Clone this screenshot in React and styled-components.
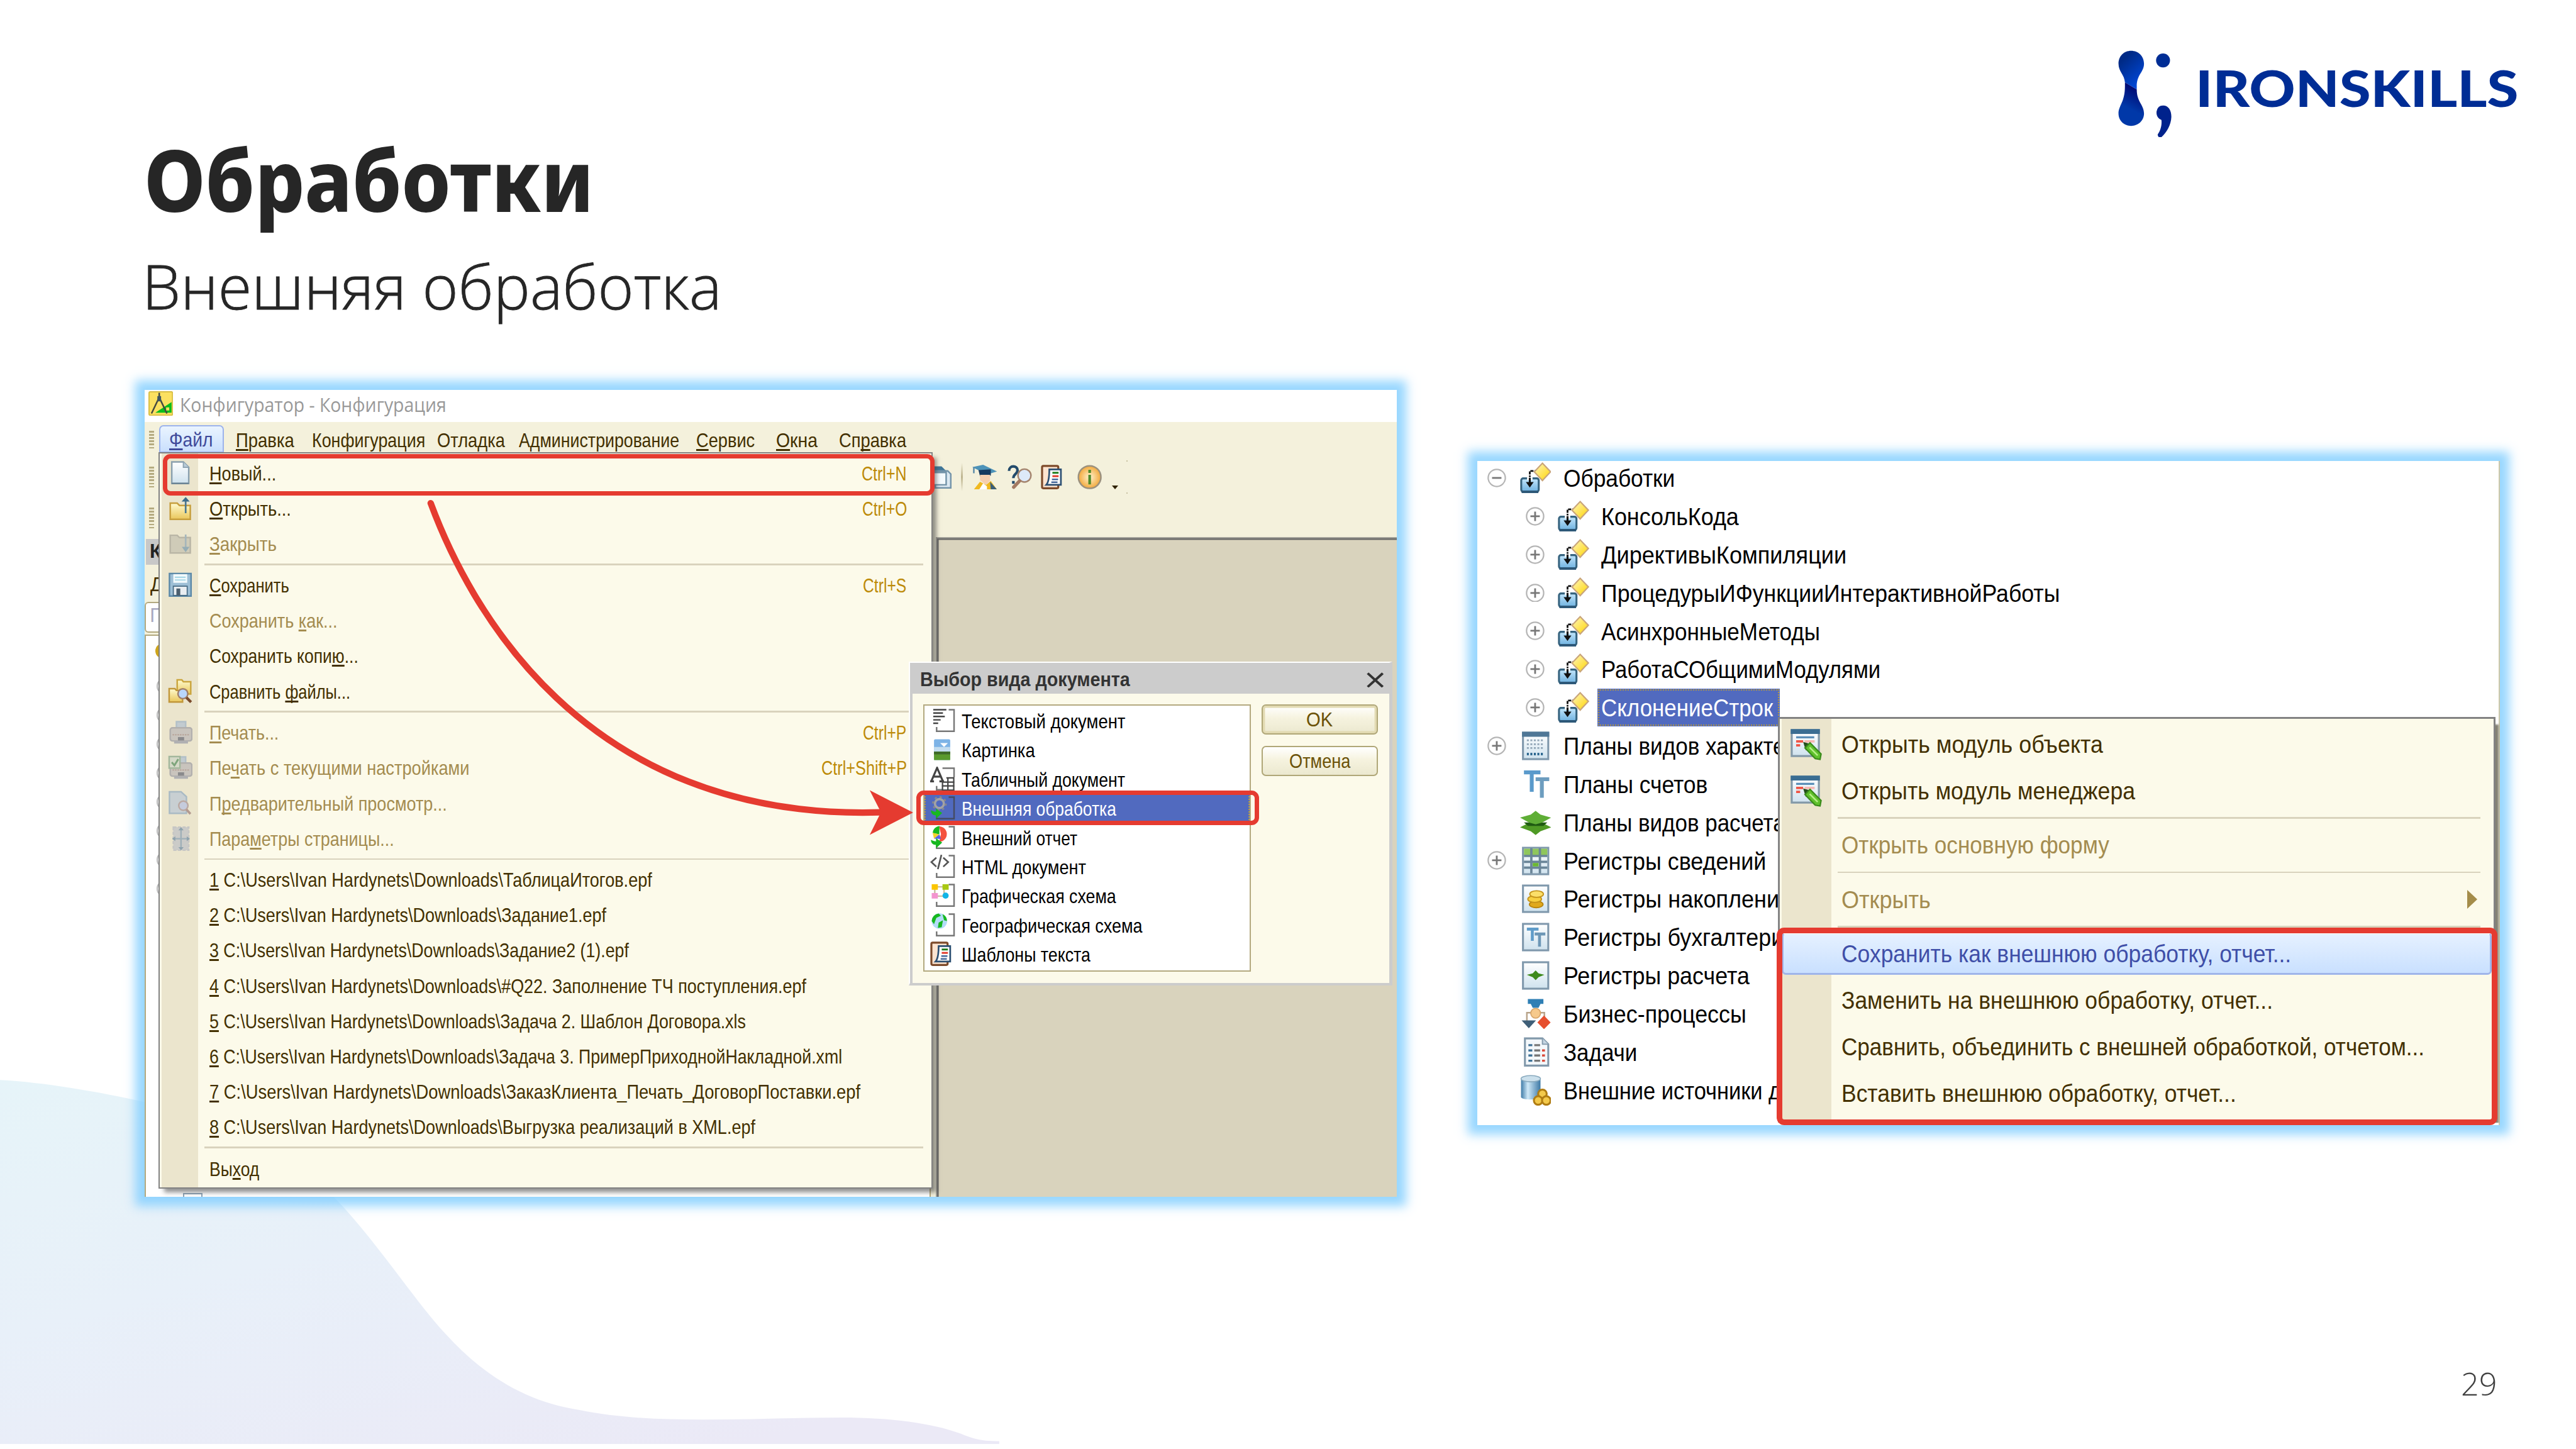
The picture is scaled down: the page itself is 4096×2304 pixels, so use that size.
import React, { useLayoutEffect, useRef } from "react";
import styled, { createGlobalStyle, css } from "styled-components";

/* The slide is 4800 x 2700 units; 1rem holds one hundred of them. */
const r = (...n) => n.map((v) => `${v / 100}rem`).join(" ");

const RED = "#e53b30";
const INK = "#433000";
const CREAM = "#fcfaea";
const SAND = "#ebe5cd";
const LINE = "#d9d3bd";
const OLIVE = "#b3a97f";
const UI = `"Liberation Sans", Arial, sans-serif`;

const Global = createGlobalStyle`
  html { font-size: calc(100vw / 48); }
  body { margin: 0; background: #fff; overflow: hidden; }
  * { box-sizing: border-box; }
`;

/* ---------- text ---------- */

const Line = styled.span`
  display: inline-block;
  white-space: pre;
  flex: none;
  transform-origin: 0 50%;
`;

const Mnemonic = styled.span`
  text-decoration: underline;
  text-decoration-thickness: ${r(3)};
  text-underline-offset: ${r(3.5)};
  text-decoration-skip-ink: none;
`;

/* A single line, condensed or widened so that it takes exactly w units. */
function Label({ w, children }) {
  const ref = useRef(null);
  useLayoutEffect(() => {
    const el = ref.current;
    if (!w || !el) return;
    const unit = parseFloat(getComputedStyle(document.documentElement).fontSize) / 100;
    const target = w * unit;
    const natural = el.offsetWidth;
    el.style.transform = `scaleX(${target / natural})`;
    el.style.marginRight = `${target - natural}px`;
  }, [w, children]);
  const at = children.indexOf("&");
  return (
    <Line ref={ref}>
      {at < 0 ? (
        children
      ) : (
        <>
          {children.slice(0, at)}
          <Mnemonic>{children[at + 1]}</Mnemonic>
          {children.slice(at + 2)}
        </>
      )}
    </Line>
  );
}

/* ---------- slide ---------- */

const Slide = styled.main`
  position: relative;
  width: 48rem;
  height: 27rem;
  overflow: hidden;
  background: #fff;
  display: flex;
  flex-direction: column;
`;

const Wave = styled.svg`
  position: absolute;
  left: 0;
  bottom: ${r(9)};
  width: ${r(1870)};
  height: ${r(691)};
`;

const Header = styled.header`
  position: relative;
  height: ${r(726)};
  flex: none;
  display: flex;
  justify-content: space-between;
  padding: ${r(92, 107, 0, 268)};
`;

const Titles = styled.div`
  display: flex;
  flex-direction: column;
  padding-top: ${r(147)};
  color: #262626;
  font-family: "Noto Sans", "Open Sans", sans-serif;
`;

const Title = styled.h1`
  margin: 0;
  height: ${r(200)};
  font-size: ${r(159)};
  line-height: ${r(190)};
  font-weight: 800;
`;

const Subtitle = styled.p`
  margin: 0 0 0 ${r(-3)};
  font-family: "Open Sans", "Noto Sans", sans-serif;
  font-size: ${r(115)};
  line-height: ${r(186)};
  font-weight: 300;
  -webkit-text-stroke: ${r(1)} #262626;
`;

const Brand = styled.div`
  display: flex;
  align-items: flex-start;
  gap: ${r(43)};
  svg { width: ${r(104)}; height: ${r(164)}; }
`;

const BrandName = styled.div`
  font: 900 ${r(94)} / ${r(142)} Lato, sans-serif;
  color: #002d95;
`;

const Board = styled.section`
  position: relative;
  display: flex;
  align-items: flex-start;
  padding-left: ${r(269)};
`;

const frame = css`
  position: relative;
  flex: none;
  box-shadow: 0 0 ${r(18)} ${r(17)} rgba(129, 206, 255, 0.82);
`;

const PageNumber = styled.footer`
  position: absolute;
  right: ${r(147)};
  bottom: ${r(77)};
  font: 300 ${r(59)} / ${r(90)} "Open Sans", sans-serif;
  color: #404040;
`;

/* ---------- configurator window ---------- */

const Configurator = styled.div`
  ${frame}
  width: ${r(2334)};
  height: ${r(1504)};
  font: ${r(36)} / ${r(66)} ${UI};
  color: ${INK};
`;

const WindowFill = styled.div`
  height: 100%;
  overflow: hidden;
  display: flex;
  flex-direction: column;
  background: #f4f1dc;
`;

const TitleBar = styled.div`
  height: ${r(60)};
  flex: none;
  display: flex;
  align-items: flex-start;
  gap: ${r(13)};
  padding: ${r(3, 0, 0, 7)};
  background: #fff;
  color: #999;
  font: ${r(36)} / ${r(51)} "Open Sans", sans-serif;
  svg { width: ${r(46)}; height: ${r(46)}; }
`;

const MenuBar = styled.nav`
  height: ${r(57)};
  flex: none;
  display: flex;
  padding: ${r(6, 0, 0, 9)};
  line-height: ${r(58)};
`;

const Grip = styled.i`
  width: ${r(9)};
  height: ${(p) => r(p.$h)};
  margin-top: ${(p) => r(p.$top || 0)};
  flex: none;
  background: repeating-linear-gradient(#b5ab80 0 ${r(3)}, transparent ${r(3)} ${r(6)});
`;

const MenuTitle = styled.span`
  margin-left: ${(p) => r(p.$gap)};
`;

const OpenMenuTitle = styled.span`
  width: ${r(120)};
  height: ${r(52)};
  margin-left: ${r(10)};
  padding-left: ${r(16)};
  border: ${r(3)} solid #9cb3ec;
  border-radius: ${r(8, 8, 0, 0)};
  background: linear-gradient(#eaf4ff, #c9dffd);
  color: #3f4a9a;
  line-height: ${r(52)};
`;

const Toolbar = styled.div`
  height: ${r(158)};
  flex: none;
  display: flex;
  align-items: flex-start;
  padding: ${r(0, 0, 0, 9)};
`;

const Grips = styled.div`
  display: flex;
  flex-direction: column;
  gap: ${r(38)};
  padding-top: ${r(26)};
`;

const Tools = styled.div`
  height: ${r(92)};
  margin-left: ${r(1441)};
  display: flex;
  align-items: center;
  svg { height: ${r(46)}; width: ${r(46)}; }
`;

const Tool = styled.span`
  display: flex;
  margin-left: ${(p) => r(p.$gap)};
`;

const ToolRule = styled.i`
  width: ${r(3)};
  height: ${r(52)};
  margin-left: ${r(17)};
  background: linear-gradient(#f4f1dc, #bdb48f 50%, #f4f1dc);
`;

const Caret = styled.i`
  margin: ${r(38, 0, 0, 19)};
  border: ${r(7)} solid transparent;
  border-top: ${r(8)} solid #2f2200;
  border-bottom: 0;
`;

const Ticks = styled.i`
  width: ${r(3)};
  height: ${r(63)};
  margin-left: ${r(15)};
  border-top: ${r(3)} solid #c9c2a2;
  border-bottom: ${r(3)} solid #c9c2a2;
`;

const WindowBody = styled.div`
  flex: 1;
  display: flex;
`;

const SidePanel = styled.aside`
  width: ${r(1465)};
  display: flex;
  flex-direction: column;
  flex: none;
`;

const SideCaption = styled.div`
  margin: ${r(3, 0, 0, 3)};
  height: ${r(48)};
  padding-left: ${r(7)};
  background: #c8c8c8;
  color: #222;
  font-weight: bold;
  line-height: ${r(47)};
`;

const SideActions = styled.div`
  height: ${r(70)};
  padding-left: ${r(11)};
  line-height: ${r(76)};
`;

const SideSearch = styled.div`
  height: ${r(57)};
  padding-left: ${r(8)};
  border: ${r(3)} solid ${OLIVE};
  border-radius: ${r(7)};
  background: #fff;
  color: #a9a9c0;
  line-height: ${r(48)};
`;

const SideTree = styled.div`
  flex: 1;
  margin-top: ${r(3)};
  display: flex;
  flex-direction: column;
  justify-content: space-between;
  padding: ${r(15, 0, 0, 18)};
  border: ${r(3)} solid ${OLIVE};
  border-bottom: 0;
  background: #fff;
`;

const SideDot = styled.i`
  width: ${r(28)};
  height: ${r(28)};
  border-radius: 50%;
  background: #cfa51b;
`;

const SideKnots = styled.div`
  flex: 1;
  display: flex;
  flex-direction: column;
  gap: ${r(24)};
  margin-left: ${r(2)};
  padding-top: ${r(36)};
`;

const SideKnot = styled.i`
  width: ${r(30)};
  height: ${r(30)};
  border: ${r(3)} solid #b9b9b9;
  border-radius: 50%;
`;

const SideSheet = styled.i`
  width: ${r(36)};
  height: ${r(7)};
  margin-left: ${r(52)};
  border: ${r(3)} solid #8fa5b8;
  border-bottom: 0;
`;

const Workspace = styled.div`
  flex: 1;
  margin-left: ${r(10)};
  border-top: ${r(3)} solid #a09f97;
  border-left: ${r(3)} solid #a09f97;
  box-shadow: inset ${r(3, 3, 0, 0)} #6a6a68;
  background: #d9d3bd;
`;

/* ---------- drop-down menus ---------- */

const Menu = styled.div`
  position: absolute;
  display: flex;
  flex-direction: column;
  border: ${r(3)} solid #828282;
  background: linear-gradient(90deg, ${CREAM} ${r(3)}, ${SAND} ${r(3)} ${(p) => r(p.$gutter)}, ${CREAM} ${(p) => r(p.$gutter)});
`;

const FileMenu = styled(Menu)`
  left: ${r(26)};
  top: ${r(117)};
  width: ${r(1443)};
  height: ${r(1372)};
  padding-top: ${r(3)};
  box-shadow: ${r(9, 9, 8, -2)} rgba(60, 60, 60, 0.55);
`;

const FileRow = styled.div`
  display: flex;
  align-items: center;
  height: ${(p) => r(p.$h || 66)};
  flex: none;
  padding-right: ${r(46)};
  line-height: ${r(62)};
  color: ${(p) => (p.$off ? "#a48c50" : INK)};
`;

const RowText = styled.span`
  display: flex;
  flex: 1;
  justify-content: space-between;
  padding-top: ${r(5)};
`;

const IconCell = styled.span`
  width: ${(p) => r(p.$w)};
  padding-left: ${(p) => r(p.$pad)};
  display: flex;
  flex: none;
  svg { width: ${(p) => r(p.$size)}; height: ${(p) => r(p.$size)}; }
`;

const Shortcut = styled.span`
  color: #bd8a08;
`;

const Rule = styled.div`
  height: ${(p) => r(p.$h)};
  flex: none;
  margin: ${(p) => r(0, p.$right, 0, p.$left)};
  display: flex;
  align-items: center;
  &::after {
    content: "";
    flex: 1;
    height: ${r(3)};
    background: ${LINE};
  }
`;

/* ---------- dialog ---------- */

const Dialog = styled.div`
  position: absolute;
  left: ${r(1424)};
  top: ${r(507)};
  width: ${r(902)};
  height: ${r(603)};
  display: flex;
  flex-direction: column;
  border-style: solid;
  border-color: #fff #ccc #ccc #fff;
  border-width: ${r(3, 6, 5, 3)};
  background: #ccc;
`;

const DialogTitle = styled.div`
  height: ${r(57)};
  flex: none;
  display: flex;
  align-items: center;
  justify-content: space-between;
  padding: ${r(6, 11, 0, 19)};
  font-weight: bold;
  color: #333;
  svg { width: ${r(32)}; height: ${r(29)}; }
`;

const DialogBody = styled.div`
  flex: 1;
  display: flex;
  gap: ${r(21)};
  margin-left: ${r(5)};
  padding: ${r(20, 0, 0, 20)};
  background: ${CREAM};
`;

const Options = styled.ul`
  list-style: none;
  margin: 0;
  padding: ${r(1, 0, 0, 0)};
  width: ${r(610)};
  height: ${r(498)};
  border: ${r(3)} solid ${OLIVE};
  background: #fff;
  color: #000;
`;

const Option = styled.li`
  display: flex;
  align-items: center;
  height: ${r(54.35)};
  line-height: ${r(49)};
  ${(p) =>
    p.$on &&
    css`
      background: #516abf;
      color: #fff;
      outline: ${r(3)} dotted #b89a3c;
      outline-offset: ${r(-3)};
    `}
`;

const Buttons = styled.div`
  display: flex;
  flex-direction: column;
  gap: ${r(20)};
`;

const Button = styled.button`
  display: flex;
  justify-content: center;
  width: ${r(216)};
  height: ${r(57)};
  padding: 0;
  border: ${r(3)} solid #b0a778;
  border-radius: ${r(8)};
  background: linear-gradient(#fff, #f6f3df 45%, #ebe8cf);
  ${(p) => p.$main && `box-shadow: inset 0 0 0 ${r(4)} #e2dab2;`}
  color: #6b5208;
  font: ${r(36)} / ${r(53)} ${UI};
`;

/* ---------- metadata tree window ---------- */

const TreeWindow = styled.div`
  ${frame}
  margin: ${r(133, 0, 0, 150)};
  width: ${r(1905)};
  height: ${r(1238)};
  font: ${r(44.5)} / ${r(71.3)} ${UI};
  color: #000;
`;

const TreeFill = styled.div`
  height: 100%;
  overflow: hidden;
  background: #fff;
  border-right: ${r(3)} solid #cfc8a8;
`;

const Tree = styled.ul`
  list-style: none;
  margin: ${r(-4, 0, 0)};
  padding: ${r(0, 0, 0, 19)};
`;

const Node = styled.li`
  display: flex;
  align-items: center;
  height: ${r(71.3)};
  padding-left: ${(p) => r(p.$deep ? 71 : 0)};
`;

const Expander = styled.span`
  display: flex;
  width: ${r(60)};
  svg { width: ${r(35)}; height: ${r(35)}; }
`;

const NodeIcon = styled.span`
  display: flex;
  width: ${r(75)};
  svg { width: ${r(58)}; height: ${r(58)}; }
`;

const NodeText = styled.span`
  display: flex;
  margin-left: ${r(-1)};
  height: ${r(71.3)};
  padding: ${r(2, 12, 0, 7)};
  ${(p) =>
    p.$on &&
    css`
      background: #516abf;
      color: #fff;
      outline: ${r(3.5)} dotted #b89a3c;
      outline-offset: ${r(-3.5)};
    `}
`;

const ContextMenu = styled(Menu)`
  left: ${r(560)};
  top: ${r(477)};
  width: ${r(1337)};
  height: ${r(756)};
  padding-top: ${r(4)};
  border-width: ${r(4)};
  border-bottom: 0;
  box-shadow: ${r(6, 14, 3, 0)} rgba(80, 75, 55, 0.7);
  clip-path: inset(0 ${r(-8)} 0 0);
  color: ${INK};
`;

const ContextRow = styled.div`
  position: relative;
  display: flex;
  align-items: center;
  height: ${r(86.5)};
  flex: none;
  padding-right: ${r(30)};
  color: ${(p) => (p.$off ? "#a48c50" : p.$on ? "#3f4fa8" : INK)};
  ${(p) =>
    p.$on &&
    css`
      background: linear-gradient(#e6f1ff, #c9e0ff) padding-box;
      margin: ${r(3, 4, 4)};
      height: ${r(79.5)};
      border: ${r(4)} solid #9fb5ea;
      border-top-color: #fff;
      border-radius: ${r(8)};
    `}
`;

const ContextText = styled.span`
  padding-top: ${r(3)};
`;

const Submenu = styled.i`
  margin-left: auto;
  border: ${r(18)} solid transparent;
  border-left: ${r(19)} solid #a48c4a;
  border-right: 0;
`;

/* ---------- annotations over the windows ---------- */

const Highlight = styled.div`
  position: absolute;
  left: ${(p) => r(p.$x)};
  top: ${(p) => r(p.$y)};
  width: ${(p) => r(p.$w)};
  height: ${(p) => r(p.$h)};
  border: ${(p) => r(p.$t)} solid ${RED};
  border-radius: ${r(14)};
`;

const Arrow = styled.svg`
  position: absolute;
  left: 0;
  top: 0;
  width: ${r(1440)};
  height: ${r(860)};
  overflow: visible;
`;

/* ---------- icons, all on a 16 x 16 grid ---------- */

const Svg = ({ children, ...p }) => (
  <svg viewBox="0 0 16 16" fill="none" {...p}>
    {children}
  </svg>
);

const Palette = styled.svg`
  position: absolute;
  width: 0;
  height: 0;
`;

const Defs = () => (
  <Palette>
    <defs>
      <linearGradient id="paper" x2="0" y2="1">
        <stop stopColor="#fff" /><stop offset="1" stopColor="#cfe2ee" />
      </linearGradient>
      <linearGradient id="gold" x2="0" y2="1">
        <stop stopColor="#fffbd0" /><stop offset="1" stopColor="#e9c65a" />
      </linearGradient>
      <linearGradient id="steel" x2="0" y2="1">
        <stop stopColor="#c3e6fb" /><stop offset="1" stopColor="#6fb2e0" />
      </linearGradient>
      <linearGradient id="diamond" x1="0" x2="1" y2="1">
        <stop stopColor="#fff6c0" /><stop offset="1" stopColor="#ffd500" />
      </linearGradient>
      <linearGradient id="cyl">
        <stop stopColor="#3f7ca8" /><stop offset=".35" stopColor="#cfe9f8" /><stop offset="1" stopColor="#3d78a5" />
      </linearGradient>
      <radialGradient id="info">
        <stop stopColor="#fff3d0" /><stop offset="1" stopColor="#f2a93c" />
      </radialGradient>
    </defs>
  </Palette>
);

const AppIcon = () => (
  <Svg>
    <rect x=".4" y=".4" width="15.2" height="15.2" rx=".8" fill="#fbe060" stroke="#d9bf45" strokeWidth=".8" />
    <path d="M15 7v7H4.500z" fill="#0bbd1b" />
    <path d="M7 1v3M7 4 2 14.500M7 4l5 10.500" stroke="#45483f" strokeWidth="1" />
    <path d="M5.800 3.200h2.400v3.400H5.800z" fill="#3f5560" />
    <path d="M11.500 10.500h2v2h-2z" fill="#fbe060" />
  </Svg>
);

const NewIcon = () => (
  <Svg>
    <path d="M2.500 1h7.500l3.500 3.500v10.500h-11z" fill="url(#paper)" stroke="#8aa0ae" />
    <path d="M10 1v3.500h3.500" fill="#b9cbd8" stroke="#8aa0ae" strokeWidth=".7" />
    <path d="M2.500 15h11" stroke="#6b8494" />
  </Svg>
);

const FolderUp = () => (
  <Svg>
    <path d="M1.500 4.500h4.500l1.500 1.500h7v9h-13z" fill="url(#gold)" stroke="#c79f3e" />
    <path d="M11.500 11V3" stroke="#4a7790" strokeWidth="1.100" />
    <path d="M8.900 3.500h5.200L11.500.500z" fill="#3d6d8c" />
  </Svg>
);

const FolderDown = () => (
  <Svg>
    <path d="M1.500 2.500h4.500l1.500 1.500h7v10h-13z" fill="#cfcbb8" stroke="#bab6a6" />
    <path d="M11.500 2v9" stroke="#a5b6bb" strokeWidth="1.100" />
    <path d="M9 10h5l-2.500 3.500z" fill="#96adb5" />
  </Svg>
);

const SaveIcon = () => (
  <Svg>
    <rect x="1" y=".8" width="14" height="14.600" fill="#9dbfd6" stroke="#5c89a8" />
    <rect x="3.500" y="1.200" width="9" height="5.600" fill="#f2fafd" />
    <path d="M4.500 3.200h7M4.500 5h7" stroke="#a9d8e6" strokeWidth=".9" />
    <rect x="3.500" y="9" width="9" height="6" fill="#e9eef2" stroke="#456a84" strokeWidth=".7" />
    <path d="M5.500 10.500h2.500v4.500H5.500z" fill="#4c5f6e" />
  </Svg>
);

const CompareIcon = () => (
  <Svg>
    <path d="M6 .8h3l1 1.200h4.800V10H6z" fill="url(#gold)" stroke="#cba63f" />
    <path d="M.8 6.500h3.700l1 1.200h4v7.500H.8z" fill="url(#gold)" stroke="#c1973a" />
    <circle cx="9.700" cy="9.800" r="3.200" fill="#b9d6fb" stroke="#a07f6a" />
    <path d="m12 12.300 3 3" stroke="#7a4a2a" strokeWidth="1.800" />
  </Svg>
);

const PrintIcon = ({ check }) => (
  <Svg>
    <path d="M5.500 1h6v5h-6z" fill="#c2cbd0" stroke="#b2c0c8" />
    <rect x="1.500" y="5" width="14" height="8.500" rx="1.500" fill="#c9c4bd" stroke="#b2b0ae" />
    <path d="M3 9.500h11" stroke="#b59f94" strokeDasharray="1 .6" strokeWidth=".7" />
    <path d="M4 13.500h9v1.700H4z" fill="#b0b0b2" />
    <path d="M6.500 11h4v2.200h-4z" fill="#8a8a8c" />
    {check && (
      <>
        <rect x=".8" y=".8" width="7" height="7.500" fill="#d5d9c8" stroke="#a3b79c" />
        <path d="m2.500 4.500 1.700 2 2.500-4" stroke="#7ea57c" strokeWidth="1.200" />
      </>
    )}
  </Svg>
);

const PreviewIcon = () => (
  <Svg>
    <path d="M1 .8h7.500L12 4v10.800H1z" fill="#c8cfd2" stroke="#a9bac4" />
    <circle cx="10" cy="9.800" r="3" fill="#c5cbdc" stroke="#bba9a2" />
    <path d="m12 12.200 2.600 3" stroke="#b39a90" strokeWidth="1.500" />
  </Svg>
);

const PageIcon = () => (
  <Svg>
    <rect x="3.500" y=".5" width="10" height="15" fill="#cbcbc8" stroke="#c6c6c4" strokeDasharray="2 1" />
    <path d="M8.500 1v14M3 8h11" stroke="#9fb0b8" />
    <path d="m6.800 2.500 1.700-2 1.700 2zM6.800 13.500l1.700 2 1.700-2zM4.800 6.400 2.800 8l2 1.600zM12.200 6.400l2 1.600-2 1.600z" fill="#8fa3ad" />
  </Svg>
);

const CopyIcon = () => (
  <Svg>
    <path d="M1 1h8l3 3v9H1z" fill="#3f7698" />
    <path d="M5 4h8l2 2v9H5z" fill="#dce9f2" stroke="#7494a9" />
    <path d="M3 5h9v8H3z" fill="#f5fafd" stroke="#7494a9" />
  </Svg>
);

const StudentIcon = () => (
  <Svg>
    <path d="M0 1.500 7 0l9 4.300-6.500 2z" fill="#4d93b8" />
    <path d="M4 3.500 12 3v4l-7 .5z" fill="#173a5e" />
    <path d="M1 1.500v4" stroke="#5a8ba8" />
    <path d="M5 6.500h6.500v3.800L9 13l-4-3z" fill="#f7cfae" />
    <path d="m1 16 4-5 4 2 3-2.500L16 16z" fill="#f0b920" />
    <path d="m4.500 16 2.500-4 2.500 2v2z" fill="#fff" />
    <path d="m11.500 11 4.500 5h-4z" fill="#3a5f78" />
  </Svg>
);

const HelpSearch = () => (
  <Svg>
    <path d="M1 4c0-4 5.500-3.600 5.500-.5C6.500 6 3.800 5.800 3.800 8.700M3.800 10.500v1.800" stroke="#234b6b" strokeWidth="1.700" />
    <circle cx="11" cy="7" r="4.200" fill="#dde9f8" stroke="#a4846d" />
    <path d="m7.800 10.500-3.800 4" stroke="#a37a62" strokeWidth="2.200" strokeLinecap="round" />
  </Svg>
);

const TemplateIcon = () => (
  <Svg>
    <rect x=".8" y=".8" width="10.500" height="14.400" rx=".8" fill="#fde4d0" stroke="#7d4a2a" strokeWidth="1.300" />
    <path d="M5.500 3h7.500v10H3.500q2-2 2-10z" fill="#fff" stroke="#2c4f72" strokeWidth="1.100" />
    <path d="M7.500 5.200h4" stroke="#1d7a18" strokeWidth="1.200" />
    <path d="M7.500 7.400h4" stroke="#e23a2b" strokeWidth="1.200" />
    <path d="M7.200 9.500h4M6.800 11.300h4" stroke="#44679a" strokeWidth="1" />
  </Svg>
);

const InfoIcon = () => (
  <Svg>
    <circle cx="8" cy="8" r="7.300" fill="url(#info)" stroke="#9b917f" />
    <path d="M8 3.300v2M8 6.500v6.200" stroke="#4f8a28" strokeWidth="1.700" />
  </Svg>
);

const CloseIcon = () => (
  <Svg preserveAspectRatio="none">
    <path d="M1 1l14 14M15 1 1 15" stroke="#333" strokeWidth="2.400" />
  </Svg>
);

const Bracket = () => <path d="M12 1h3.500v14H4.200v-2.800" stroke="#777" strokeWidth="1" />;

const TextDoc = () => (
  <Svg>
    <Bracket />
    <path d="M2 1h8.500M2 3.200h6.300M2 5.400h7.500M2 7.600h4.800M2 9.800h3.200" stroke="#444" strokeWidth="1" />
  </Svg>
);
const PictureDoc = () => (
  <Svg>
    <rect x="2.500" y="1" width="10.500" height="13.500" rx=".8" fill="#7db3e6" />
    <path d="M2.500 6h10.500v3H2.500z" fill="#c3dcef" />
    <path d="M6.500 3.500h5L9 6z" fill="#fff" />
    <path d="M2.500 9h10.500v5.500H2.500z" fill="#5a9a2d" />
    <path d="M2.500 9h10.500v1.800H2.500z" fill="#3f6a28" />
  </Svg>
);
const TableDoc = () => (
  <Svg>
    <path d="M8 1h7.500v6M4.200 12.500V15H8" stroke="#777" />
    <path d="m.8 9.300 3.700-8.500 3.700 8.500M2.300 6.500h4.500M0 9.500h2.500M6 9.500h3" stroke="#444" strokeWidth="1.300" />
    <path d="M7.500 10h8.300M7.500 12.500h8.300M7.500 15.200h8.300M8 9v7M11.500 7v9M15.300 7v9M10.500 7.300h5" stroke="#444" strokeWidth=".9" />
  </Svg>
);
const GreenArrow = () => (
  <path d="M.5 9.500C.5 12 2 12.800 3.800 12.800V15L7.800 11.300 3.800 8.500v2C2.500 10.500 1.700 10 .5 9.500z" fill="#17b81f" />
);
const ProcessDoc = () => (
  <Svg>
    <path d="M12 1h3.500v14H4.200v-2.800" stroke="#454b63" strokeWidth="1" />
    <circle cx="6" cy="5.200" r="2.900" stroke="#a3a3a3" strokeWidth="1.500" />
    <circle cx="6" cy="5.200" r="4.200" stroke="#8a8a8a" strokeDasharray="1.400 1.900" strokeWidth="1.100" />
    <GreenArrow />
  </Svg>
);
const ReportDoc = () => (
  <Svg>
    <Bracket />
    <path d="M5.800.8a5 5 0 0 1 0 10L7 5.800z" fill="#f4523f" />
    <path d="M6 .5v5.500L1.600 5A5 5 0 0 1 6 .5z" fill="#17b81f" />
    <path d="M1.600 5 6 6 2.500 8.800z" fill="#f3d22a" />
    <path d="M2.500 8.800 6 6l1 3z" fill="#5762e8" />
    <GreenArrow />
  </Svg>
);
const HtmlDoc = () => (
  <Svg>
    <Bracket />
    <path d="M4 2.300.8 5.200 4 8.200M8.500 2.300l3.200 2.900-3.200 3M7.300.5 5 9.800" stroke="#555" strokeWidth="1.100" />
  </Svg>
);
const SchemeDoc = () => (
  <Svg>
    <Bracket />
    <path d="M3 2.500h6v6H3z" stroke="#c9c0a0" />
    <path d="M1 .8h4v3.600H1z" fill="#fbc500" />
    <path d="M8 .8h4v3.600H8z" fill="#a9c813" />
    <path d="M1 6.500h4v3.600H1z" fill="#f394cf" />
    <circle cx="10" cy="8.200" r="2" fill="#11b4e6" />
  </Svg>
);
const GeoDoc = () => (
  <Svg>
    <Bracket />
    <circle cx="6" cy="5.500" r="5" fill="#b3dcf7" />
    <path d="M1 5.500A5 5 0 0 1 5.500.6L7 2 4 3.500 2.500 7.500zM8 1a5 5 0 0 1 2.900 4.500L9 5zM5.500 6.500 8.300 5l-.8 4.500L5 10z" fill="#17b81f" />
  </Svg>
);

const Plus = ({ minus }) => (
  <Svg>
    <circle cx="8" cy="8" r="7.300" stroke="#b5b5b5" strokeWidth="1.200" />
    <path d={minus ? "M4 8h8" : "M4 8h8M8 4v8"} stroke="#777" strokeWidth="1.500" />
  </Svg>
);

const Processing = () => (
  <Svg>
    <path d="M5 10.500V4.500h3" stroke="#111" strokeWidth=".9" strokeDasharray="1.600 .5" />
    <rect x=".6" y="8.300" width="9" height="6.800" rx="1" fill="url(#steel)" stroke="#37647f" />
    <path d="M3.600 7.600h2.800v1.600H3.600z" fill="#fff" />
    <path d="M.8 15.200h8.600" stroke="#2d5878" strokeWidth="1.300" />
    <path d="M5 8v3" stroke="#111" />
    <path d="M3 10.200h4L5 13z" fill="#111" />
    <path d="m11.500.5 4.200 4.400-4.200 4.500-4.200-4.500z" fill="url(#diamond)" stroke="#c9a57a" strokeWidth=".7" />
  </Svg>
);
const Sheet = ({ children, head }) => (
  <Svg>
    <rect x="1.500" y="1.300" width="13" height="13.600" fill="url(#paper)" stroke="#7f98ac" />
    {head && <path d="M1 .8h14v2.600H1z" fill={head} />}
    {children}
  </Svg>
);
const Kinds = () => (
  <Sheet head="#4f7796">
    <path d="M3.500 5.200h9M3.500 7.200h9M3.500 9.200h9" stroke="#93a7b8" strokeDasharray="1 .8" strokeWidth=".9" />
    <path d="M3.500 12.300h9" stroke="#2b668f" strokeDasharray="1 .8" strokeWidth="1.300" />
  </Sheet>
);
const Accounts = () => (
  <Svg>
    <path d="M2 2h8.500M6 2v10" stroke="#5a9acb" strokeWidth="2" />
    <path d="M8 5.500h7M11.200 5.500V15" stroke="#6d9dbf" strokeWidth="2" />
  </Svg>
);
const Calc = () => (
  <Svg>
    <path d="M0 10.500 3 9h10l3 1.500-5.500 2L8 14.500l-2.500-2z" fill="#4f9a25" />
    <path d="M2 8h12l-2 1.800H4z" fill="#1f5a12" />
    <path d="M0 5.500 5.500 4 8 2l2.500 2L16 5.500 11.500 8 8 9 4.500 8z" fill="#5fae36" />
  </Svg>
);
const InfoReg = () => (
  <Sheet>
    <path d="M2 1.800h12v3.500H2z" fill="#8fc65c" />
    <path d="M5.800 1.500v13M10.200 1.500v13M2 5.500h12M2 8.500h12M2 11.500h12" stroke="#6a8598" strokeWidth="1.200" />
    <path d="M6.500 9.100h3v1.800h-3z" fill="#6cb733" />
  </Sheet>
);
const Accum = () => (
  <Sheet>
    <ellipse cx="8.300" cy="11" rx="3.500" ry="1.700" fill="#e0a91e" stroke="#b9860f" strokeWidth=".6" />
    <ellipse cx="7.500" cy="8.300" rx="3.500" ry="1.700" fill="#f7cf40" stroke="#c4931b" strokeWidth=".6" />
    <ellipse cx="8.500" cy="5.700" rx="3.500" ry="1.700" fill="#fbdf6a" stroke="#c4931b" strokeWidth=".6" />
  </Sheet>
);
const Ledger = () => (
  <Sheet>
    <path d="M3.500 4h6M6.300 4v6" stroke="#5f9cc9" strokeWidth="1.500" />
    <path d="M7.500 6.500h5.500M10 6.500v6.500" stroke="#6d97b6" strokeWidth="1.500" />
  </Sheet>
);
const CalcReg = () => (
  <Sheet>
    <path d="M3.500 7.800 6.500 7 8 5.500 9.500 7l3 .8-3 1.200L8 10.500 6.500 9z" fill="#3e8a1c" />
  </Sheet>
);
const Business = () => (
  <Svg>
    <path d="M4 .5h8v2.500H10.500L9.500 5h-3l-1-2H4z" fill="#2f7fb5" />
    <path d="M6 7.500H3.500V12M10 7.500h2.500V12" stroke="#b8a48a" strokeWidth=".8" />
    <circle cx="8" cy="7.800" r="2.500" fill="#f6c98b" stroke="#d9a76b" strokeWidth=".6" />
    <path d="M.8 11.500h7.400L4.500 15.500z" fill="#3f5f78" />
    <path d="m12.300 9 3.400 3.500-3.400 3.500-3.400-3.500z" fill="#e6502f" />
  </Svg>
);
const Tasks = () => (
  <Svg>
    <path d="M2.500 1h9l3 3v11h-12z" fill="#f4f8fb" stroke="#8299ab" />
    <path d="M11.500 1v3h3" fill="#c5d5e2" stroke="#8299ab" strokeWidth=".6" />
    <path d="M4.300 4.500h2M4.300 7.200h2M4.300 9.800h2M4.300 12.500h2" stroke="#3f7297" strokeWidth="1.100" />
    <path d="M7.300 4.500h3M7.300 7.200h3M7.300 9.800h3M7.300 12.500h3" stroke="#777" strokeWidth="1.100" />
    <path d="M11.300 7.200h1.500M11.300 9.800h1.500M11.300 12.500h1.500" stroke="#d94b3a" strokeWidth="1.100" />
  </Svg>
);
const External = () => (
  <Svg>
    <path d="M.5 2v9.500c0 1.600 10 1.600 10 0V2z" fill="url(#cyl)" />
    <ellipse cx="5.500" cy="2" rx="5" ry="1.600" fill="#cbe0ec" stroke="#88a9bd" strokeWidth=".5" />
    <circle cx="11.500" cy="9.800" r="2.200" fill="#f3c94b" stroke="#b17d12" />
    <circle cx="9.300" cy="13.200" r="2.200" fill="#f3c94b" stroke="#b17d12" />
    <circle cx="13.500" cy="13.200" r="2.200" fill="#f3c94b" stroke="#b17d12" />
  </Svg>
);
const ModuleIcon = () => (
  <Svg>
    <rect x=".6" y="1" width="13.500" height="12.800" fill="url(#paper)" stroke="#8399a8" />
    <path d="M.1.4h14.500v2.400H.1z" fill="#3a6d92" />
    <path d="M2.800 4.500h9" stroke="#5b8fb8" strokeWidth="1" />
    <path d="M2.800 6.500h3.500" stroke="#f05545" strokeWidth="1.200" />
    <path d="M7 6.500h5" stroke="#f7b9b3" strokeWidth="1.200" />
    <path d="M2.800 8.500h2" stroke="#f05545" strokeWidth="1.200" />
    <path d="m6.300 6.800 4 1.100L7.600 11z" fill="#244f1c" />
    <path d="m7.200 9.800 2.500-2.600 5.500 5.600-.5 2.700-2.400-.4z" fill="#5fc12d" stroke="#3a8a1b" strokeWidth=".7" />
    <path d="m9.500 9.500 4 4" stroke="#b6ee88" strokeWidth=".8" />
  </Svg>
);

/* ---------- data ---------- */

const fileMenu = [
  [
    ["&Новый...", 124, NewIcon, "Ctrl+N", 84],
    ["&Открыть...", 152, FolderUp, "Ctrl+O", 84],
    ["&Закрыть", 125, FolderDown, null, 0, true],
  ],
  [
    ["&Сохранить", 149, SaveIcon, "Ctrl+S", 81],
    ["Сохранить &как...", 238, null, null, 0, true],
    ["Сохранить копи&ю...", 278],
    ["Сравнить &файлы...", 263, CompareIcon],
  ],
  [
    ["&Печать...", 129, PrintIcon, "Ctrl+P", 81, true],
    ["Пе&чать с текущими настройками", 485, () => <PrintIcon check />, "Ctrl+Shift+P", 160, true],
    ["П&редварительный просмотр...", 443, PreviewIcon, null, 0, true],
    ["Пара&метры страницы...", 344, PageIcon, null, 0, true],
  ],
  [
    ["&1 C:\\Users\\Ivan Hardynets\\Downloads\\ТаблицаИтогов.epf", 825],
    ["&2 C:\\Users\\Ivan Hardynets\\Downloads\\Задание1.epf", 739],
    ["&3 C:\\Users\\Ivan Hardynets\\Downloads\\Задание2 (1).epf", 782],
    ["&4 C:\\Users\\Ivan Hardynets\\Downloads\\#Q22. Заполнение ТЧ поступления.epf", 1112],
    ["&5 C:\\Users\\Ivan Hardynets\\Downloads\\Задача 2. Шаблон Договора.xls", 1000],
    ["&6 C:\\Users\\Ivan Hardynets\\Downloads\\Задача 3. ПримерПриходнойНакладной.xml", 1179],
    ["&7 C:\\Users\\Ivan Hardynets\\Downloads\\ЗаказКлиента_Печать_ДоговорПоставки.epf", 1213],
    ["&8 C:\\Users\\Ivan Hardynets\\Downloads\\Выгрузка реализаций в XML.epf", 1017],
  ],
  [["Вы&ход", 93]],
];

const menuTitles = [
  ["&Правка", 109, 22],
  ["Конфигурация", 211, 33],
  ["Отладка", 126, 23],
  ["Администрирование", 299, 25],
  ["&Сервис", 109, 32],
  ["&Окна", 77, 39],
  ["Сп&равка", 126, 40],
];

const kinds = [
  ["Текстовый документ", 305, TextDoc],
  ["Картинка", 137, PictureDoc],
  ["Табличный документ", 305, TableDoc],
  ["Внешняя обработка", 288, ProcessDoc],
  ["Внешний отчет", 216, ReportDoc],
  ["HTML документ", 232, HtmlDoc],
  ["Графическая схема", 288, SchemeDoc],
  ["Географическая схема", 337, GeoDoc],
  ["Шаблоны текста", 240, TemplateIcon],
];

const nodes = [
  ["Обработки", 208, Processing, "-", false],
  ["КонсольКода", 257, Processing, "+", true],
  ["ДирективыКомпиляции", 457, Processing, "+", true],
  ["ПроцедурыИФункцииИнтерактивнойРаботы", 855, Processing, "+", true],
  ["АсинхронныеМетоды", 408, Processing, "+", true],
  ["РаботаСОбщимиМодулями", 521, Processing, "+", true],
  ["СклонениеСтрок", 320, Processing, "+", true, true],
  ["Планы видов характеристик", 539, Kinds, "+"],
  ["Планы счетов", 269, Accounts],
  ["Планы видов расчета", 413, Calc],
  ["Регистры сведений", 378, InfoReg, "+"],
  ["Регистры накопления", 425, Accum],
  ["Регистры бухгалтерии", 434, Ledger],
  ["Регистры расчета", 347, CalcReg],
  ["Бизнес-процессы", 341, Business],
  ["Задачи", 137, Tasks],
  ["Внешние источники данных", 522, External],
];

const contextMenu = [
  [
    ["Открыть модуль объекта", 487, { icon: true }],
    ["Открыть модуль менеджера", 547, { icon: true }],
  ],
  [["Открыть основную форму", 499, { off: true }]],
  [["Открыть", 166, { off: true, sub: true }]],
  [
    ["Сохранить как внешнюю обработку, отчет...", 838, { on: true }],
    ["Заменить на внешнюю обработку, отчет...", 804, {}],
    ["Сравнить, объединить с внешней обработкой, отчетом...", 1086, {}],
    ["Вставить внешнюю обработку, отчет...", 736, {}],
  ],
];

/* ---------- parts ---------- */

const Logo = () => (
  <svg viewBox="3945 92 104 164">
    <defs>
      <linearGradient id="lg1" x1="0" y1="0" x2=".6" y2="1">
        <stop offset=".25" stopColor="#002a86" /><stop offset="1" stopColor="#0048d8" />
      </linearGradient>
      <linearGradient id="lg2" x1=".6" y1="0" x2=".3" y2="1">
        <stop stopColor="#000068" /><stop offset=".6" stopColor="#0038a8" />
      </linearGradient>
    </defs>
    <path d="M3971.500 94C3985 94 3995.500 104 3995.500 118C3995.500 134 3982 138 3982 160V166L3960 153C3959 138 3948 133 3948 118C3948 104 3958 94 3971.500 94Z" fill="url(#lg1)" />
    <path d="M3960 153 3982 166C3982 190 3995.500 194 3995.500 211C3995.500 224 3985 234 3971.500 234C3958 234 3948 224 3948 211C3948 196 3960 190 3960 160Z" fill="url(#lg2)" />
    <circle cx="4031" cy="112" r="13" fill="#002d95" />
    <path d="M4031 196C4041 196 4046.500 205 4046.500 217C4046 232 4038 246 4028 255Q4021 257 4021 250C4027 242 4029 231 4028 223C4021 220 4018 214 4019 207Q4021 196 4031 196Z" fill="#00228c" />
  </svg>
);

const FileDropDown = () => (
  <FileMenu $gutter={72}>
    {fileMenu.map((group, g) => (
      <React.Fragment key={g}>
        {g > 0 && <Rule $h={g === 4 ? 12 : 10.6} $left={83} $right={15} />}
        {group.map(([text, w, Icon, keys, kw, off]) => (
          <FileRow key={text} $off={off} $h={g === 3 ? 65.8 : 66}>
            <IconCell $w={93} $pad={15} $size={46}>{Icon && <Icon />}</IconCell>
            <RowText>
              <Label w={w}>{text}</Label>
              {keys && <Shortcut><Label w={kw}>{keys}</Label></Shortcut>}
            </RowText>
          </FileRow>
        ))}
      </React.Fragment>
    ))}
  </FileMenu>
);

const KindDialog = () => (
  <Dialog>
    <DialogTitle>
      <Label w={391}>Выбор вида документа</Label>
      <CloseIcon />
    </DialogTitle>
    <DialogBody>
      <Options>
        {kinds.map(([text, w, Icon], i) => (
          <Option key={text} $on={i === 3}>
            <IconCell $w={69} $pad={11} $size={46}><Icon /></IconCell>
            <RowText><Label w={w}>{text}</Label></RowText>
          </Option>
        ))}
      </Options>
      <Buttons>
        <Button $main><Label w={49}>OK</Label></Button>
        <Button><Label w={114}>Отмена</Label></Button>
      </Buttons>
    </DialogBody>
  </Dialog>
);

const ObjectMenu = () => (
  <ContextMenu $gutter={96}>
    {contextMenu.map((group, g) => (
      <React.Fragment key={g}>
        {g > 0 && <Rule $h={14.8} $left={108} $right={25} />}
        {group.map(([text, w, o]) => (
          <ContextRow key={text} $on={o.on} $off={o.off}>
            <IconCell $w={o.on ? 107 : 115} $pad={20} $size={60}>{o.icon && <ModuleIcon />}</IconCell>
            <ContextText><Label w={w}>{text}</Label></ContextText>
            {o.sub && <Submenu />}
          </ContextRow>
        ))}
      </React.Fragment>
    ))}
    <Rule $h={14.8} $left={108} $right={25} />
  </ContextMenu>
);

export default function App() {
  return (
    <>
      <Global />
      <Defs />
      <Slide>
        <Wave viewBox="0 2000 1870 691">
          <defs>
            <linearGradient id="wave" x1="0" y1="0" x2=".75" y2="1">
              <stop stopColor="#e6f4f9" />
              <stop offset=".45" stopColor="#e8f0f9" />
              <stop offset="1" stopColor="#ebe9f6" />
            </linearGradient>
          </defs>
          <path
            d="M0 2012C80 2016 185 2034 269 2053C430 2095 540 2140 622 2230C700 2310 770 2420 830 2485C900 2562 980 2612 1080 2627C1220 2656 1400 2641 1569 2641C1660 2641 1740 2652 1790 2671C1820 2684 1840 2685 1862 2685V2691H0Z"
            fill="url(#wave)"
          />
        </Wave>

        <Header>
          <Titles>
            <Title><Label w={838}>Обработки</Label></Title>
            <Subtitle><Label w={1080}>Внешняя обработка</Label></Subtitle>
          </Titles>
          <Brand>
            <Logo />
            <BrandName><Label w={602}>IRONSKILLS</Label></BrandName>
          </Brand>
        </Header>

        <Board>
          <Configurator>
            <WindowFill>
              <TitleBar>
                <AppIcon />
                <Label w={497}>Конфигуратор - Конфигурация</Label>
              </TitleBar>
              <MenuBar>
                <Grip $h={33} $top={11} />
                <OpenMenuTitle><Label w={82}>&Файл</Label></OpenMenuTitle>
                {menuTitles.map(([text, w, gap]) => (
                  <MenuTitle key={text} $gap={gap}><Label w={w}>{text}</Label></MenuTitle>
                ))}
              </MenuBar>
              <Toolbar>
                <Grips>
                  <Grip $h={39} />
                  <Grip $h={39} />
                </Grips>
                <Tools>
                  <Tool $gap={0}><CopyIcon /></Tool>
                  <ToolRule />
                  <Tool $gap={18}><StudentIcon /></Tool>
                  <Tool $gap={19}><HelpSearch /></Tool>
                  <Tool $gap={17}><TemplateIcon /></Tool>
                  <Tool $gap={21}><InfoIcon /></Tool>
                  <Caret />
                  <Ticks />
                </Tools>
              </Toolbar>
              <WindowBody>
                <SidePanel>
                  <SideCaption>К</SideCaption>
                  <SideActions>Д</SideActions>
                  <SideSearch>П</SideSearch>
                  <SideTree>
                    <SideDot />
                    <SideKnots>
                      {Array.from({ length: 8 }, (_, i) => (
                        <SideKnot key={i} />
                      ))}
                    </SideKnots>
                    <SideSheet />
                  </SideTree>
                </SidePanel>
                <Workspace />
              </WindowBody>
            </WindowFill>
            <FileDropDown />
            <KindDialog />
            <Highlight $x={35} $y={120} $w={1437} $h={78} $t={9} />
            <Highlight $x={1438} $y={747} $w={639} $h={64} $t={9} />
            <Arrow viewBox="269 726 1440 860">
              <path d="M802 937C870 1120 1080 1530 1640 1513" fill="none" stroke={RED} strokeWidth="12" strokeLinecap="round" />
              <path d="M1701 1513.500 1620 1555 1641 1513 1620 1472Z" fill={RED} />
            </Arrow>
          </Configurator>

          <TreeWindow>
            <TreeFill>
              <Tree>
                {nodes.map(([text, w, Icon, mark, deep, on]) => (
                  <Node key={text} $deep={deep}>
                    <Expander>{mark && <Plus minus={mark === "-"} />}</Expander>
                    <NodeIcon><Icon /></NodeIcon>
                    <NodeText $on={on}><Label w={w}>{text}</Label></NodeText>
                  </Node>
                ))}
              </Tree>
            </TreeFill>
            <ObjectMenu />
            <Highlight $x={557} $y={870} $w={1344} $h={368} $t={11} />
          </TreeWindow>
        </Board>

        <PageNumber>29</PageNumber>
      </Slide>
    </>
  );
}
